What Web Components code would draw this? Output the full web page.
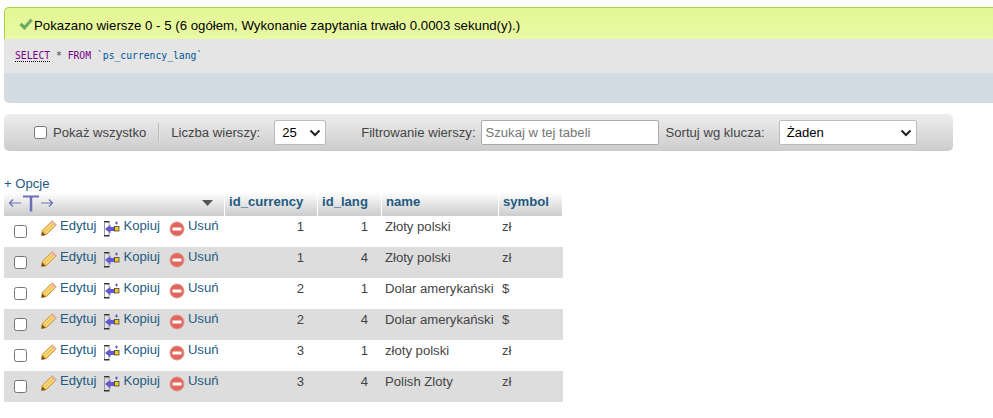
<!DOCTYPE html>
<html lang="pl"><head><meta charset="utf-8"><title>phpMyAdmin</title>
<style>
html,body{margin:0;padding:0;background:#fff;height:418px;overflow:hidden}
body{font:13.12px/17px "Liberation Sans",Arial,sans-serif;color:#444}
</style></head><body>
<pma-page>
  <pma-result-panel>
    <span slot="message">Pokazano wiersze 0 - 5 (6 ogółem, Wykonanie zapytania trwało 0.0003 sekund(y).)</span>
  </pma-result-panel>
  <pma-toolbar></pma-toolbar>
  <pma-table></pma-table>
</pma-page>
<script>
function tpl(s){const t=document.createElement('template');t.innerHTML=s;return t;}
class Base extends HTMLElement{
  constructor(){super();this.attachShadow({mode:'open'}).appendChild(this.constructor.t.content.cloneNode(true));}
}
class Page extends Base{static t=tpl(`<style>:host{display:flex;flex-direction:column;padding:7px 0 0 4px}</style><slot></slot>`);}
class Panel extends Base{static t=tpl(`<style>
:host{display:block}
.msg{height:32px;box-sizing:border-box;border:1px solid #a6d046;border-bottom:none;border-right:none;border-radius:5px 0 0 0;background:linear-gradient(#e4f694,#e9f9a5);color:#000;display:flex;align-items:center;padding:3px 0 0 14px;font-size:13.24px}
svg{display:block;flex:none;margin:-1px 1px 0 0}
.sql{height:34px;background:#e5e5e5;box-sizing:border-box;padding:10px 0 0 11px;font:9.72px/13px "DejaVu Sans Mono","Liberation Mono",monospace;color:#444}
.kw{color:#708}.kw.u{border-bottom:1px dotted #000}.id{color:#059}
.foot{height:30px;background:#d3dce3;border-radius:0 0 0 5px}
</style>
<div class="msg"><svg width="14" height="13" viewBox="0 0 14 13"><path d="M.5 7 2.800 4.800 5.400 7.400 11.500.8 13.600 2.800 5.500 12Z" fill="#69a95a" stroke="#9cc78f" stroke-width=".7"/></svg><slot name="message"></slot></div>
<div class="sql"><span class="kw u">SELECT</span> * <span class="kw">FROM</span> <span class="id">\`ps_currency_lang\`</span></div>
<div class="foot"></div>`);}
class Toolbar extends Base{static t=tpl(`<style>
:host{display:flex;align-items:center;height:37px;margin:11px 40px 0 0;background:linear-gradient(#eee,#ccc);border-radius:5px;color:#444;box-sizing:border-box;white-space:nowrap}
input[type=checkbox]{appearance:none;width:13px;height:13px;border:1px solid #767676;border-radius:2.5px;background:#fff;margin:0 0 0 30px;flex:none}
.sep{width:1px;height:19px;background:#bbb;border-right:1px solid #e4e4e4;margin:0 11px 0 12px}
.box{box-sizing:border-box;height:25px;background:#fff;border:1px solid #bbb;border-radius:2px;color:#000;display:flex;align-items:center;justify-content:space-between}
.box svg{display:block}
.l{margin-left:6px}
.i{border:1px solid #aaa;color:#757575;padding-left:4px;justify-content:flex-start;width:178px;margin:0 7px 0 5px}
</style>
<input type="checkbox"><span class="l">Pokaż wszystko</span><span class="sep"></span><span>Liczba wierszy:</span>
<div class="box" style="width:52px;margin:0 35px 0 14px;padding:0 4px 0 7px">25<svg width="12" height="8" viewBox="0 0 12 8"><path d="M1.500 1.500 6 6l4.500-4.500" fill="none" stroke="#222" stroke-width="2"/></svg></div>
<span>Filtrowanie wierszy:</span><div class="box i">Szukaj w tej tabeli</div><span>Sortuj wg klucza:</span>
<div class="box" style="width:138px;margin-left:14px;padding:0 4px 0 7px">Żaden<svg width="12" height="8" viewBox="0 0 12 8"><path d="M1.500 1.500 6 6l4.500-4.500" fill="none" stroke="#222" stroke-width="2"/></svg></div>`);}
const pencil=`<svg style="margin-top:2px" width="16" height="16" viewBox="0 0 16 16"><path d="M.5 15.500 1.200 10.500 11.200.8 15.300 4.800 5.500 14.500Z" fill="#f4c653" stroke="#b78a32" stroke-width=".8"/><path d="M.5 15.500 1.200 11.500 4.700 14.900Z" fill="#7a4a1e"/><path d="M11.200.8 15.300 4.800 13.600 6.500 9.500 2.500Z" fill="#eeb0a4"/><path d="M3 10.500 11 3M5 12.500 13 5" stroke="#fbe7a6"/></svg>`;
const copy=`<svg width="16" height="16" viewBox="0 0 16 16"><path d="M0 .8H5.500M0 14.800H5.500" stroke="#333" stroke-width="1.500"/><path d="M.5 1V14M5 1V4M5 11V14" stroke="#999"/><path d="M1 8 6.500 3.500V6H10.800V10H6.500V12.500Z" fill="#6558cf"/><rect x="10.500" y="5.500" width="4.500" height="4.500" fill="#f6c824" stroke="#333" stroke-width=".7"/><path d="M12.500 .5v3M11 2h3" stroke="#5b55c4"/></svg>`;
const del=`<svg style="margin-left:1px" width="16" height="16" viewBox="0 0 16 16"><circle cx="8" cy="8" r="7" fill="#e2665c" stroke="#dd9a92"/><rect x="3.500" y="6.500" width="9" height="3" rx=".5" fill="#fff"/></svg>`;
class Act extends Base{static t=tpl(`<style>:host{display:inline-flex;align-items:flex-start;gap:3px;color:#235a81;white-space:nowrap}
::slotted(svg){margin-top:3px;flex:none}
span{line-height:17px;margin-top:-1px}</style><slot name="i"></slot><span><slot></slot></span>`);}
class Table extends Base{static t=tpl(`<style>
:host{display:block;margin-top:25px}
.o{color:#235a81;height:16px;line-height:16px}
.g{display:grid;grid-template-columns:221px 93px 64px 117px 64px;width:559px}
.h{height:24px;background:linear-gradient(#fff,#ccc);font-weight:bold;color:#235a81;box-sizing:border-box;padding:0 0 5px 4px;border-right:1px solid #fff;display:flex;align-items:center}
.h:last-child{border-right:none}
.h0{justify-content:space-between;padding:0 11px 0 4px}
.c{height:31px;box-sizing:border-box;padding:2px 3px 0;color:#444;line-height:17px;white-space:nowrap}
.n{text-align:right;padding-right:14px}
.a{display:flex;padding:2px 0 0 10px}
.a input{appearance:none;width:13px;height:13px;border:1px solid #767676;border-radius:2.5px;background:#fff;margin:7px 14px 0 0;flex:none}
.a .w{display:flex;gap:8px}
.e{background:#ddd}
</style>
<div class="o">+ Opcje</div><div class="g" id="g"><div class="h h0"><svg width="46" height="18" viewBox="0 0 46 18"><g stroke="#6a6fb8" fill="none"><path d="M1 8H13M5 4.500 1.500 8 5 11.500M33 8H45M41 4.500 44.500 8 41 11.500" stroke-width="1.200"/><path d="M15 1.500H31" stroke-width="2"/><path d="M23 1.500V16.500" stroke-width="2.500"/></g></svg><svg style="margin-bottom:3px" width="11" height="6" viewBox="0 0 11 6"><path d="M0 0H11L5.500 6Z" fill="#555"/></svg></div><div class="h">id_currency</div><div class="h">id_lang</div><div class="h">name</div><div class="h">symbol</div></div>`);
connectedCallback(){
 const rows=[[1,1,'Złoty polski','zł'],[1,4,'Złoty polski','zł'],[2,1,'Dolar amerykański','$'],[2,4,'Dolar amerykański','$'],[3,1,'złoty polski','zł'],[3,4,'Polish Zloty','zł']];
 const g=this.shadowRoot.getElementById('g');
 rows.forEach((r,i)=>{const e=i%2?' e':'';
  g.insertAdjacentHTML('beforeend',`<div class="c a${e}"><input type="checkbox"><div class="w"><pma-act>${pencil.replace('<svg','<svg slot="i"')}Edytuj</pma-act><pma-act>${copy.replace('<svg','<svg slot="i"')}Kopiuj</pma-act><pma-act>${del.replace('<svg','<svg slot="i"')}Usuń</pma-act></div></div><div class="c n${e}">${r[0]}</div><div class="c n${e}">${r[1]}</div><div class="c${e}">${r[2]}</div><div class="c${e}">${r[3]}</div>`);
 });
}}
customElements.define('pma-page',Page);customElements.define('pma-result-panel',Panel);customElements.define('pma-toolbar',Toolbar);customElements.define('pma-act',Act);customElements.define('pma-table',Table);
</script>
</body></html>
